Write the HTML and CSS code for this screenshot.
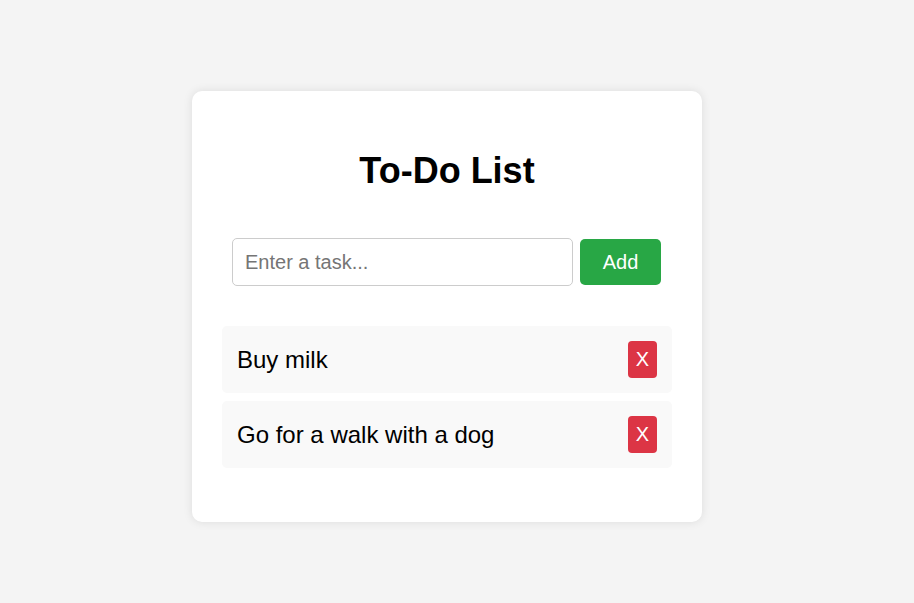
FILE: index.html
```html
<!DOCTYPE html>
<html lang="en">
<head>
<meta charset="utf-8">
<title>To-Do List</title>
<link rel="stylesheet" href="styles.css">
</head>
<body>
<div class="page">
  <div class="card">
    <h1 class="title">To-Do List</h1>
    <div class="form">
      <input class="task-input" type="text" placeholder="Enter a task...">
      <button class="add-btn" type="button">Add</button>
    </div>
    <ul class="list">
      <li class="item"><span class="item-text">Buy milk</span><button class="del-btn" type="button">X</button></li>
      <li class="item"><span class="item-text">Go for a walk with a dog</span><button class="del-btn" type="button">X</button></li>
    </ul>
  </div>
</div>
</body>
</html>
```
FILE: styles.css
```css
html, body {
  margin: 0;
  padding: 0;
  background: #f4f4f4;
  font-family: "Liberation Sans", Arial, sans-serif;
}
.page {
  box-sizing: border-box;
  height: 100vh;
  padding: 10px 20px 0 0;
  display: flex;
  justify-content: center;
  align-items: center;
}
.card {
  box-sizing: border-box;
  width: 510px;
  background: #fff;
  border-radius: 10px;
  box-shadow: 0 0 10px rgba(0, 0, 0, 0.1);
  padding: 30px;
}
.title {
  margin: 29px 0 46px;
  font-size: 36px;
  font-weight: bold;
  text-align: center;
  color: #000;
  line-height: normal;
}
.form {
  display: flex;
  justify-content: flex-start;
  gap: 7px;
  padding-left: 10px;
  margin-bottom: 40px;
}
.task-input {
  box-sizing: border-box;
  width: 341px;
  height: 48px;
  padding: 0 12px;
  border: 1px solid #ccc;
  border-radius: 5px;
  font-family: "Liberation Sans", Arial, sans-serif;
  font-size: 20px;
  color: #000;
  outline: none;
}
.task-input::placeholder {
  color: #757575;
}
.add-btn {
  box-sizing: border-box;
  width: 81px;
  height: 46px;
  margin-top: 1px;
  border: none;
  border-radius: 5px;
  background: #28a745;
  color: #fff;
  font-family: "Liberation Sans", Arial, sans-serif;
  font-size: 20px;
  padding: 0;
}
.list {
  list-style: none;
  margin: 0 0 24px;
  padding: 0;
  display: flex;
  flex-direction: column;
  gap: 8px;
}
.item {
  display: flex;
  justify-content: space-between;
  align-items: center;
  padding: 15px;
  background: #f9f9f9;
  border-radius: 5px;
}
.item-text {
  font-size: 24px;
  color: #000;
}
.del-btn {
  box-sizing: border-box;
  height: 37px;
  padding: 0 8px;
  border: none;
  border-radius: 4px;
  background: #dc3545;
  color: #fff;
  font-family: "Liberation Sans", Arial, sans-serif;
  font-size: 20px;
}
```
